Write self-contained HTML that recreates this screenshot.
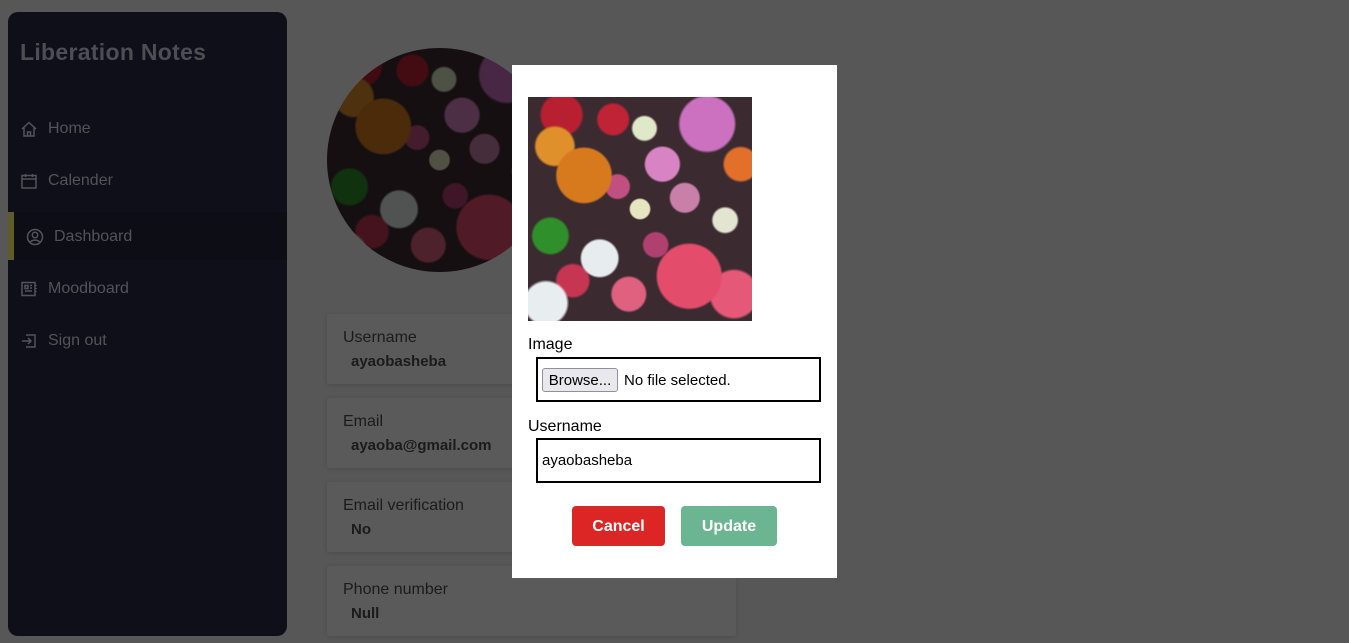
<!DOCTYPE html>
<html><head><style>
*{box-sizing:border-box;margin:0;padding:0}
body{width:1349px;height:643px;background:#575757;font-family:"Liberation Sans",sans-serif;position:relative;overflow:hidden}
.sb{position:absolute;left:8px;top:12px;width:279px;height:624px;background:#0e0f18;border-radius:10px}
.logo{position:absolute;left:20px;top:39px;font-size:23px;font-weight:bold;color:#4d4d53;letter-spacing:0.3px}
.nav{position:absolute;left:20px;font-size:16px;color:#535359;display:flex;align-items:center;gap:10px;line-height:20px}
.nav svg{width:18px;height:18px;stroke:#535359;fill:none;stroke-width:1.5}
.act{position:absolute;left:8px;top:212px;width:279px;height:48px;background:#0d0e15;border-left:6px solid #5e5c2c}
.card{position:absolute;left:327px;width:409px;height:70px;background:#5a5a5a;box-shadow:0 1px 4px rgba(0,0,0,.12);border-radius:3px}
.card .l{position:absolute;left:16px;top:15px;font-size:16px;color:#1b1b1b}
.card .v{position:absolute;left:24px;top:39px;font-size:15px;font-weight:bold;color:#1b1b1b}
.flow{background:
radial-gradient(circle at 25% 35%,#d77a1e 0 12%,transparent 13%),
radial-gradient(circle at 12% 22%,#e0902a 0 7%,transparent 8%),
radial-gradient(circle at 60% 30%,#d884c4 0 8%,transparent 9%),
radial-gradient(circle at 15% 8%,#b81f30 0 7%,transparent 8%),
radial-gradient(circle at 38% 10%,#c02335 0 6%,transparent 7%),
radial-gradient(circle at 52% 14%,#dfe8c8 0 5%,transparent 6%),
radial-gradient(circle at 80% 12%,#cc70c0 0 10%,transparent 11%),
radial-gradient(circle at 95% 30%,#e2702b 0 6%,transparent 7%),
radial-gradient(circle at 50% 50%,#e7e4c0 0 6%,transparent 7%),
radial-gradient(circle at 70% 45%,#c980a8 0 7%,transparent 8%),
radial-gradient(circle at 88% 55%,#e2e6d0 0 5%,transparent 6%),
radial-gradient(circle at 72% 80%,#e44c6c 0 13%,transparent 14%),
radial-gradient(circle at 92% 88%,#e55878 0 8%,transparent 9%),
radial-gradient(circle at 10% 62%,#2f8f2a 0 7%,transparent 8%),
radial-gradient(circle at 32% 72%,#e7ecee 0 8%,transparent 9%),
radial-gradient(circle at 45% 88%,#e06080 0 7%,transparent 8%),
radial-gradient(circle at 8% 92%,#e8eef0 0 7%,transparent 8%),
radial-gradient(circle at 20% 82%,#c63552 0 6%,transparent 7%),
radial-gradient(circle at 57% 66%,#b04070 0 6%,transparent 7%),
radial-gradient(circle at 40% 40%,#c05080 0 6%,transparent 7%),
#3b2a30}
.modal{position:absolute;left:512px;top:65px;width:325px;height:513px;background:#fff}
.lab{position:absolute;left:16px;font-size:16px;color:#000;line-height:20px}
.box{position:absolute;left:24px;width:285px;height:45px;border:2px solid #000}
.btn{position:absolute;top:441px;height:40px;border-radius:4px;color:#fff;font-weight:bold;font-size:16px;text-align:center;line-height:42px}
</style></head><body>
<div class="sb"></div>
<div class="act"></div>
<div class="logo">Liberation Notes</div>
<div class="nav" style="top:119px"><svg viewBox="0 0 18 18"><path d="M2 9L9 2.5 16 9M4 7.5V16h10V7.5M7.5 16v-4h3v4"/></svg>Home</div>
<div class="nav" style="top:171px"><svg viewBox="0 0 18 18"><rect x="2" y="3.5" width="14" height="12.5"/><path d="M2 7h14M5.5 2v3M12.5 2v3"/></svg>Calender</div>
<div class="nav" style="top:227px;left:26px"><svg viewBox="0 0 18 18"><circle cx="9" cy="9" r="7.5"/><circle cx="9" cy="7" r="2.7"/><path d="M4.5 14c1.5-2.5 7.5-2.5 9 0"/></svg>Dashboard</div>
<div class="nav" style="top:279px"><svg viewBox="0 0 18 18"><rect x="2" y="2.5" width="13" height="13"/><path d="M5 5.5h3v3H5zM10 5.5h2M10 8h2M5 11h7M16 5v1M16 8v1M16 11v1"/></svg>Moodboard</div>
<div class="nav" style="top:331px"><svg viewBox="0 0 18 18"><path d="M6 3h9v12H6M2 9h9M8 6l3 3-3 3"/></svg>Sign out</div>
<div class="flow" style="position:absolute;left:327px;top:48px;width:225px;height:224px;border-radius:50%;filter:brightness(.35)"></div>
<div class="card" style="top:314px"><div class="l">Username</div><div class="v">ayaobasheba</div></div>
<div class="card" style="top:398px"><div class="l">Email</div><div class="v">ayaoba@gmail.com</div></div>
<div class="card" style="top:482px"><div class="l">Email verification</div><div class="v">No</div></div>
<div class="card" style="top:566px"><div class="l">Phone number</div><div class="v">Null</div></div>
<div class="modal">
<div class="flow" style="position:absolute;left:16px;top:32px;width:224px;height:224px"></div>
<div class="lab" style="top:270px">Image</div>
<div class="box" style="top:292px"><div style="position:absolute;left:4px;top:9px;width:76px;height:24px;background:#e9e9ed;border:1px solid #8f8f9d;border-radius:3px;font-size:15px;line-height:24px;text-align:center">Browse...</div><div style="position:absolute;left:86px;top:12px;font-size:15px;line-height:20px">No file selected.</div></div>
<div class="lab" style="top:352px">Username</div>
<div class="box" style="top:373px"><div style="position:absolute;left:4px;top:11px;font-size:15px;line-height:20px">ayaobasheba</div></div>
<div class="btn" style="left:60px;width:93px;background:#dc2626">Cancel</div>
<div class="btn" style="left:169px;width:96px;background:#6bb592">Update</div>
</div>
</body></html>
